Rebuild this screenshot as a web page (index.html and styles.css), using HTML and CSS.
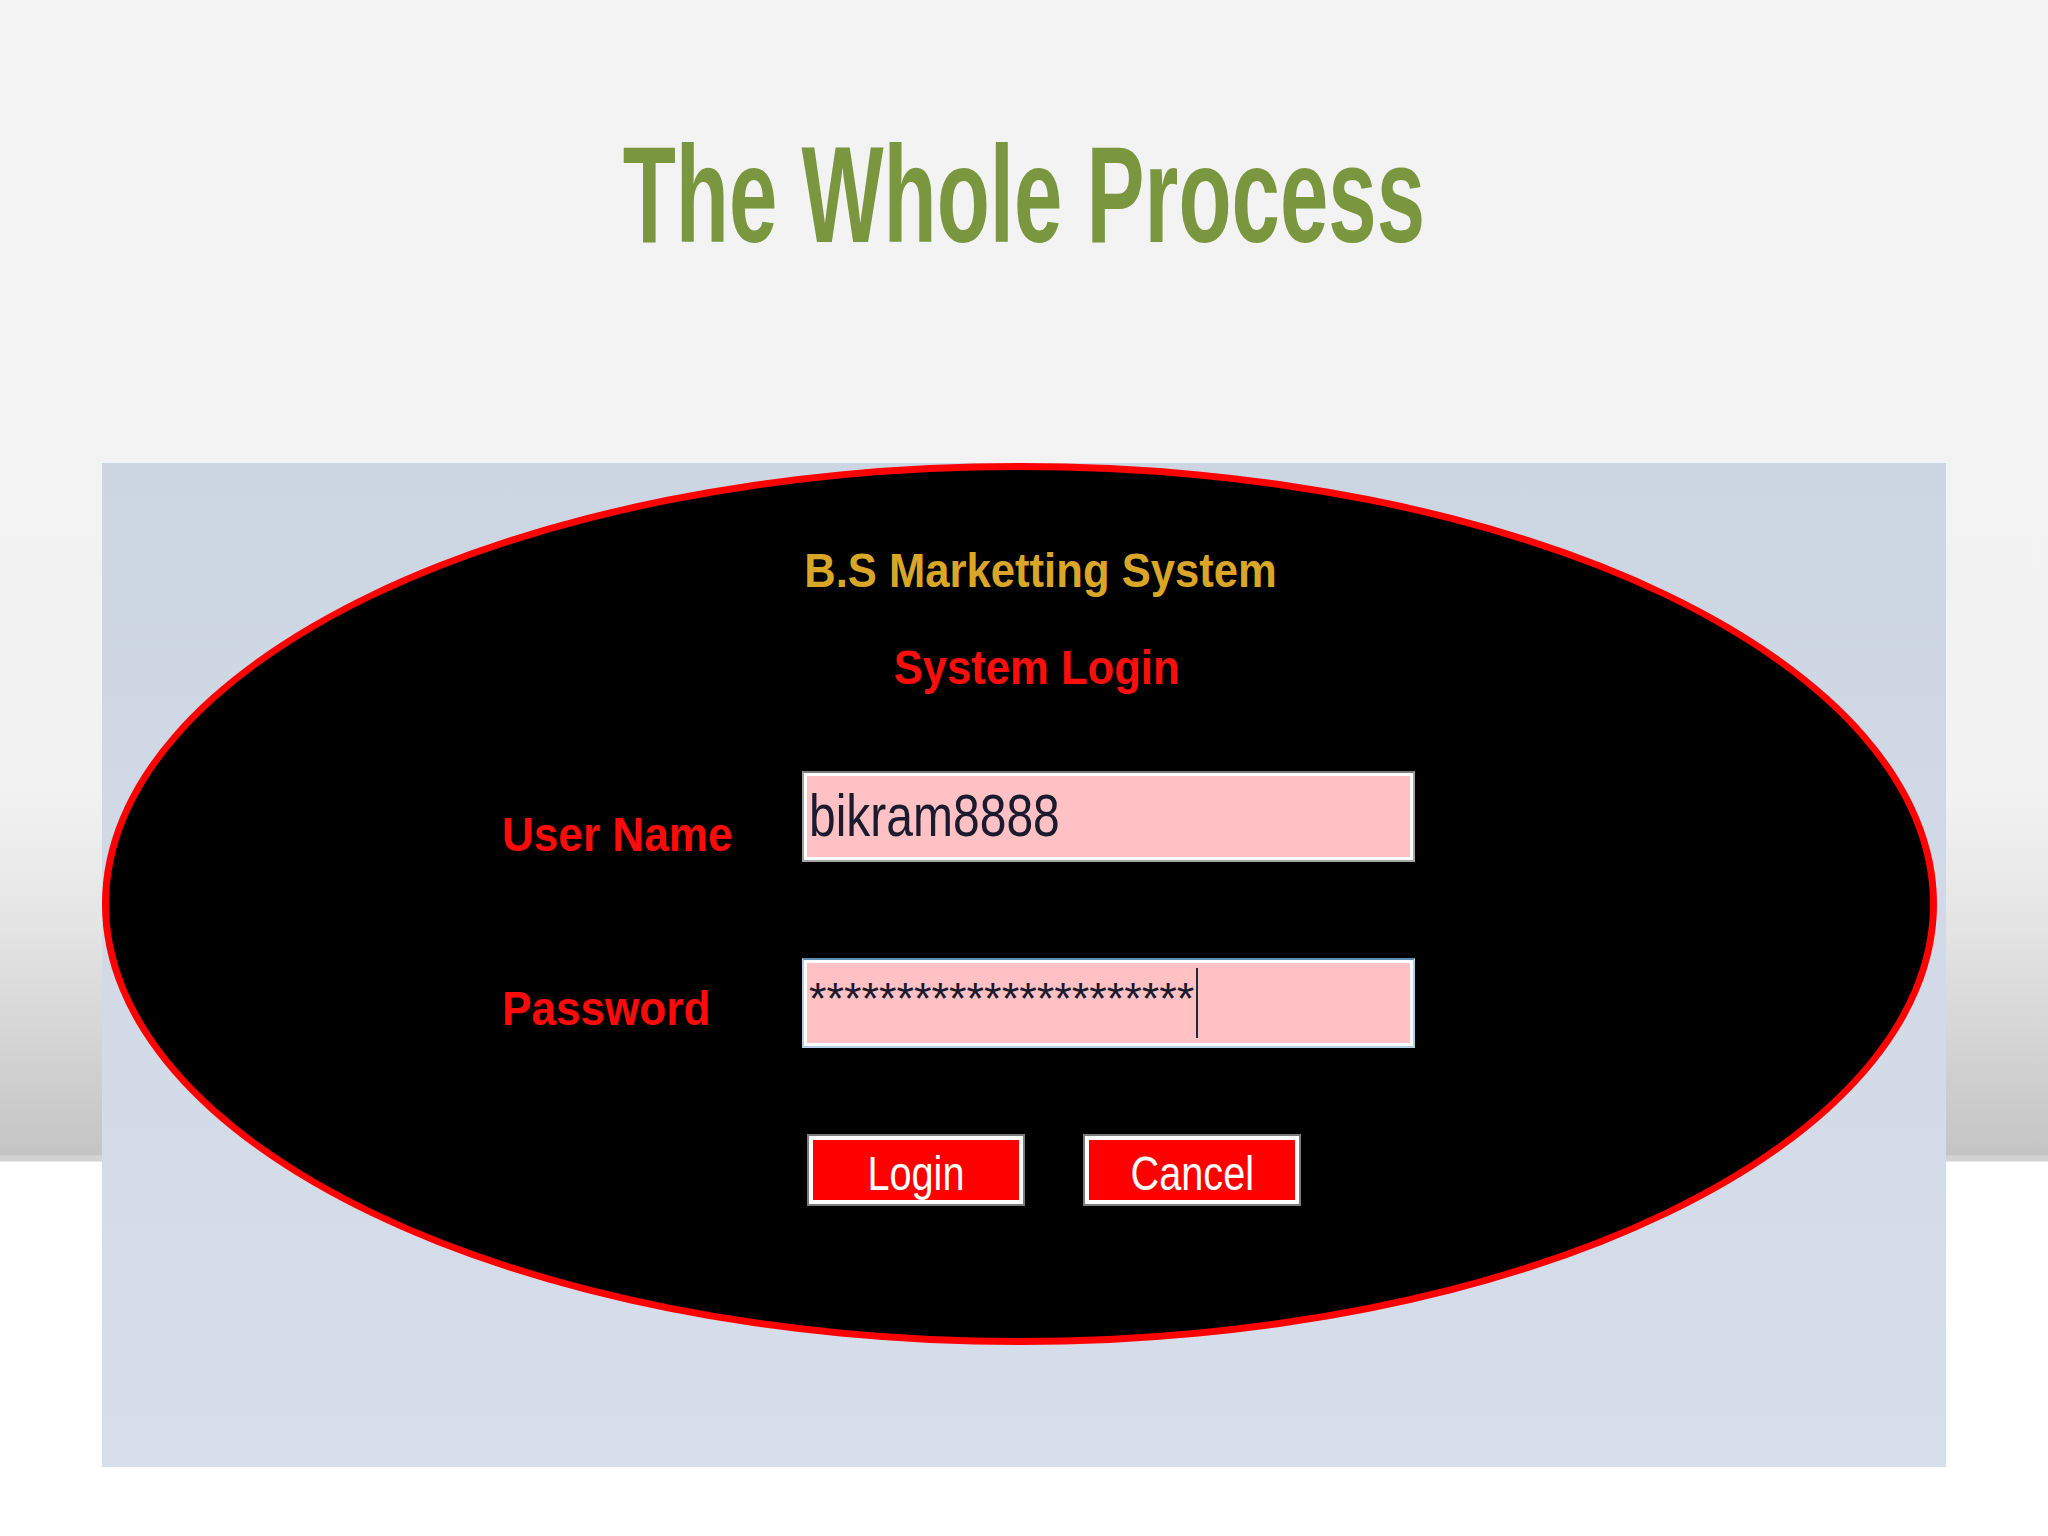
FILE: index.html
```html
<!DOCTYPE html>
<html lang="en">
<head>
<meta charset="utf-8">
<title>The Whole Process</title>
<link rel="stylesheet" href="styles.css">
</head>
<body>
<header class="slide-header">
  <h1 class="slide-title"><span class="slide-title-text">The Whole Process</span></h1>
</header>
<main class="shot">
  <div class="ellipse">
    <div class="brand"><span class="squeeze">B.S Marketting System</span></div>
    <div class="subtitle"><span class="squeeze">System Login</span></div>
    <div class="form">
      <div class="row">
        <div class="label label-user"><span class="squeeze-left">User Name</span></div>
        <div class="field field-user"><span class="field-text">bikram8888</span></div>
      </div>
      <div class="row row-pass">
        <div class="label label-pass"><span class="squeeze-left">Password</span></div>
        <div class="field field-pass"><span class="mask">**********************</span><span class="caret"></span></div>
      </div>
      <div class="buttons">
        <button class="btn" type="button"><span class="btn-text">Login</span></button>
        <button class="btn" type="button"><span class="btn-text">Cancel</span></button>
      </div>
    </div>
  </div>
</main>
</body>
</html>
```
FILE: styles.css
```css
html, body {
  margin: 0;
  padding: 0;
}

body {
  width: 2048px;
  height: 1536px;
  overflow: hidden;
  font-family: "Liberation Sans", Arial, sans-serif;
  background: linear-gradient(to bottom,
    #f3f3f3 0px,
    #f2f2f2 790px,
    #e4e4e4 930px,
    #c4c4c4 1155px,
    #d3d3d3 1156px,
    #d3d3d3 1161px,
    #ffffff 1162px,
    #ffffff 1536px);
}

.slide-header {
  padding-top: 126px;
  height: 137px;
  text-align: center;
}

.slide-title {
  margin: 0;
  font-family: "Liberation Sans", Arial, sans-serif;
  font-weight: bold;
  font-size: 137px;
  line-height: 137px;
  color: #7a963e;
}

.slide-title-text {
  display: inline-block;
  white-space: nowrap;
  transform: scaleX(0.635);
  transform-origin: center;
}

.shot {
  margin: 200px 0 0 102px;
  width: 1844px;
  height: 1004px;
  background: linear-gradient(to bottom, #ccd6e2, #d7deeb);
  display: flex;
  align-items: flex-start;
}

.ellipse {
  box-sizing: border-box;
  flex: none;
  width: 1835px;
  height: 882px;
  border: 7px solid #ff0000;
  border-radius: 50%;
  background: #000000;
  padding-top: 76px;
}

.brand,
.subtitle {
  height: 49px;
  text-align: center;
  font-weight: bold;
  font-size: 49px;
  line-height: 49px;
}

.brand {
  padding-left: 42px;
  color: #d9a628;
}

.subtitle {
  margin-top: 48px;
  padding-left: 34px;
  color: #ff0d0d;
}

.squeeze {
  display: inline-block;
  white-space: nowrap;
  transform: scaleX(0.89);
  transform-origin: center;
}

.form {
  margin: 79px 0 0 393px;
}

.row {
  display: flex;
  align-items: flex-start;
}

.row-pass {
  margin-top: 96px;
}

.label {
  flex: none;
  width: 300px;
  font-weight: bold;
  font-size: 49px;
  line-height: 49px;
  color: #ff0a0a;
}

.label-user {
  margin-top: 38.6px;
}

.label-pass {
  margin-top: 25.6px;
}

.squeeze-left {
  display: inline-block;
  white-space: nowrap;
  transform: scaleX(0.9);
  transform-origin: left center;
}

.field {
  box-sizing: border-box;
  flex: none;
  width: 613px;
  height: 91px;
  padding-left: 5px;
  background: #ffc1c3;
  display: flex;
  align-items: flex-start;
  box-shadow: inset 0 0 0 3px #ffffff;
}

.field-user {
  border: 2px solid #a3a3a3;
  border-top-color: #7d7d7d;
}

.field-pass {
  height: 90px;
  border: 2px solid #b3cde6;
  border-top-color: #5c8bb2;
}

.field-text {
  display: inline-block;
  margin-top: 13px;
  font-size: 60px;
  line-height: 60px;
  color: #1b1b30;
  white-space: nowrap;
  transform: scaleX(0.8);
  transform-origin: left center;
}

.mask {
  margin-top: 16px;
  font-size: 45px;
  line-height: 45px;
  color: #1a1a2e;
  white-space: nowrap;
}

.caret {
  flex: none;
  width: 2px;
  height: 70px;
  margin-top: 8px;
  margin-left: 2px;
  background: #16303a;
}

.buttons {
  display: flex;
  gap: 58px;
  margin: 86px 0 0 305px;
}

.btn {
  box-sizing: border-box;
  display: block;
  width: 218px;
  height: 72px;
  margin: 0;
  padding: 6px 0 0;
  border: 2px solid #7b7b7b;
  box-shadow: inset 0 0 0 4px #ffffff;
  background: #ff0000;
  color: #ffffff;
  font-family: "Liberation Sans", Arial, sans-serif;
  font-size: 49px;
  line-height: 49px;
  text-align: center;
}

.btn-text {
  display: inline-block;
  white-space: nowrap;
  transform: scaleX(0.81);
  transform-origin: center;
}
```
